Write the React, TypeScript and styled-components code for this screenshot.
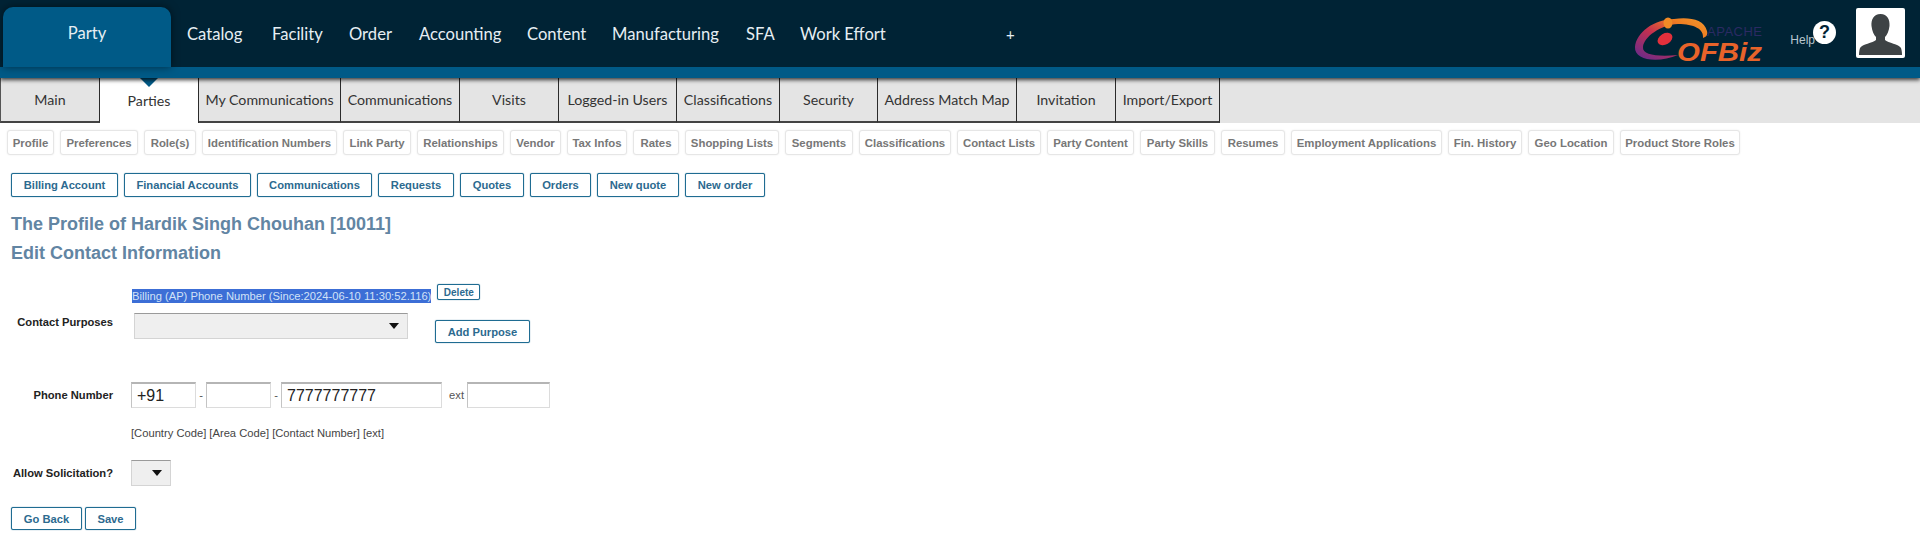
import React from 'react';
import styled, { createGlobalStyle } from 'styled-components';

const GlobalStyle = createGlobalStyle`
    html, body {
        margin: 0;
        padding: 0;
        background: #fff;
        font-family: "Liberation Sans", Arial, sans-serif;
    }
`;

const menuFont = `Lato, "Noto Sans", sans-serif`;

const Page = styled.div`
    width: 1920px;
    height: 543px;
    overflow: hidden;
`;

const Header = styled.header`
    position: relative;
    z-index: 2;
    display: flex;
    height: 67px;
    background: #002335;
    border-bottom: 11px solid #005a87;
    box-shadow: 0 2px 4px rgba(0, 0, 0, 0.75);
`;

const PartyTab = styled.div`
    width: 168px;
    height: 60px;
    margin: 7px 0 0 3px;
    padding-top: 16px;
    box-sizing: border-box;
    background: #005a87;
    border-radius: 10px 10px 0 0;
    box-shadow: 0 0 8px rgba(0, 0, 0, 0.5);
    color: #e6eef3;
    font: 400 16.6px ${menuFont};
    text-align: center;
`;

const MainMenu = styled.nav`
    display: flex;
    align-items: center;
    height: 67px;
    margin-left: 16px;
`;

const MenuItem = styled.a<{ $w: number }>`
    width: ${p => p.$w}px;
    color: #e6eef3;
    font: 400 16.6px ${menuFont};
    white-space: nowrap;
`;

const Plus = styled.span`
    margin-left: 118px;
    color: #e6eef3;
    font: 400 15px ${menuFont};
`;

const HeaderRight = styled.div`
    display: flex;
    align-items: flex-start;
    margin-left: auto;
`;

const Logo = styled.svg`
    width: 133px;
    height: 46px;
    margin: 17px 23px 0 0;
    overflow: visible;
`;

const HelpLabel = styled.span`
    margin-top: 33px;
    color: #b9c6cf;
    font-size: 12px;
`;

const HelpIcon = styled.div`
    width: 23px;
    height: 23px;
    margin: 21px 20px 0 -2px;
    border-radius: 50%;
    background: #fff;
    color: #002335;
    font: 700 18px/23px "Liberation Sans", sans-serif;
    text-align: center;
`;

const Avatar = styled.svg`
    width: 49px;
    height: 50px;
    margin: 8px 15px 0 0;
    background: #fff;
    border-radius: 2px;
`;

const TabBar = styled.div`
    display: flex;
    height: 45px;
    background: #e4e4e4;
`;

const Tab = styled.a<{ $w: number; $active?: boolean }>`
    position: relative;
    display: flex;
    align-items: center;
    justify-content: center;
    width: ${p => p.$w}px;
    box-sizing: border-box;
    background: ${p => (p.$active ? '#fff' : '#e4e4e4')};
    border-right: 1px solid #2b2b2b;
    border-bottom: ${p => (p.$active ? 'none' : '2px solid #444')};
    color: #333;
    font: 400 14.2px ${menuFont};
    white-space: nowrap;

    &:first-child {
        border-left: 1px solid #555;
    }

    ${p =>
        p.$active &&
        `&::before {
            content: '';
            position: absolute;
            top: 0;
            left: 50%;
            margin-left: -9px;
            border: 9px solid transparent;
            border-top-color: #005a87;
            border-bottom: none;
        }`}
`;

const PillRow = styled.div`
    display: flex;
    gap: 6px;
    margin: 7px 0 0 7px;
`;

const Pill = styled.a<{ $w: number }>`
    display: flex;
    align-items: center;
    justify-content: center;
    width: ${p => p.$w}px;
    height: 25px;
    box-sizing: border-box;
    background: #fff;
    border: 1px solid #e6e6e6;
    border-radius: 3px;
    box-shadow: 0 0 2px rgba(0, 0, 0, 0.08);
    color: #777;
    font-size: 11.4px;
    font-weight: 700;
    white-space: nowrap;
`;

const ButtonRow = styled.div`
    display: flex;
    gap: 6px;
    margin: 18px 0 0 11px;
`;

const Button = styled.a<{ $w: number; $h?: number; $small?: boolean }>`
    display: flex;
    align-items: center;
    justify-content: center;
    flex: none;
    width: ${p => p.$w}px;
    height: ${p => p.$h ?? 24}px;
    box-sizing: border-box;
    background: #fff;
    border: 1px solid #1f6c92;
    border-radius: 2px;
    box-shadow: 0 0 1px #1f6c92;
    color: #2c6a8f;
    font-size: ${p => (p.$small ? 10 : 11.2)}px;
    font-weight: 700;
    white-space: nowrap;
`;

const DeleteButton = styled(Button)`
    margin-left: 6px;
`;

const AddPurposeButton = styled(Button)`
    margin: 7px 0 0 27px;
`;

const Title = styled.h1`
    margin: 17px 0 0 11px;
    color: #6285a3;
    font-size: 18px;
    line-height: 21px;
    font-weight: 700;
`;

const SubTitle = styled.h2`
    margin: 8px 0 0 11px;
    color: #6285a3;
    font-size: 18px;
    line-height: 21px;
    font-weight: 700;
`;

const Form = styled.form`
    display: flex;
    flex-direction: column;
    margin-top: 20px;
`;

const Row = styled.div<{ $mt?: number; $top?: boolean }>`
    display: flex;
    align-items: ${p => (p.$top ? 'flex-start' : 'center')};
    margin-top: ${p => p.$mt ?? 0}px;
`;

const Label = styled.label<{ $pt?: number }>`
    flex: none;
    width: 113px;
    margin-right: 18px;
    padding-top: ${p => p.$pt ?? 0}px;
    color: #222;
    font-size: 11.2px;
    font-weight: 700;
    text-align: right;
`;

const PurposeLine = styled.div`
    display: flex;
    align-items: flex-start;
    margin-left: 132px;
`;

const Selected = styled.span`
    margin-top: 5px;
    background: #3c6ed6;
    color: #d2e2f6;
    font-size: 11.2px;
    line-height: 14px;
    white-space: nowrap;
`;

const SelectWrap = styled.div<{ $w: number; $ml?: number }>`
    position: relative;
    flex: none;
    width: ${p => p.$w}px;
    height: 26px;
    margin-left: ${p => p.$ml ?? 0}px;

    &::after {
        content: '';
        position: absolute;
        top: 10px;
        right: 9px;
        border: 5px solid transparent;
        border-top: 6px solid #111;
        border-bottom: none;
    }
`;

const Select = styled.select`
    display: block;
    width: 100%;
    height: 100%;
    box-sizing: border-box;
    appearance: none;
    background: #efefef;
    border: 1px solid #d4d4d4;
    border-top: 1px solid #9a9a9a;
    border-radius: 0;
`;

const Input = styled.input<{ $w: number }>`
    width: ${p => p.$w}px;
    height: 26px;
    box-sizing: border-box;
    padding: 0 5px;
    background: #fff;
    border: 1px solid #dcdcdc;
    border-top: 2px solid #b5b5b5;
    border-left: 1px solid #c4c4c4;
    border-radius: 0;
    color: #222;
    font: 400 16px "Liberation Sans", sans-serif;
`;

const Sep = styled.span`
    flex: none;
    width: 10px;
    color: #555;
    font-size: 11.2px;
    text-align: center;
`;

const ExtLabel = styled(Sep)`
    width: 25px;
    padding-right: 3px;
    box-sizing: border-box;
    text-align: right;
`;

const Hint = styled.div`
    margin: 19px 0 0 131px;
    color: #444;
    font-size: 11.2px;
    line-height: 13px;
`;

const FooterButtons = styled.div`
    display: flex;
    gap: 3px;
    margin: 21px 0 0 11px;
`;

const menuItems: [string, number][] = [
    ['Catalog', 85],
    ['Facility', 77],
    ['Order', 70],
    ['Accounting', 108],
    ['Content', 85],
    ['Manufacturing', 134],
    ['SFA', 54],
    ['Work Effort', 88],
];

const tabs: [string, number][] = [
    ['Main', 100],
    ['Parties', 99],
    ['My Communications', 142],
    ['Communications', 119],
    ['Visits', 99],
    ['Logged-in Users', 118],
    ['Classifications', 103],
    ['Security', 98],
    ['Address Match Map', 139],
    ['Invitation', 99],
    ['Import/Export', 104],
];

const pills: [string, number][] = [
    ['Profile', 47],
    ['Preferences', 78],
    ['Role(s)', 52],
    ['Identification Numbers', 135],
    ['Link Party', 68],
    ['Relationships', 87],
    ['Vendor', 51],
    ['Tax Infos', 60],
    ['Rates', 46],
    ['Shopping Lists', 94],
    ['Segments', 68],
    ['Classifications', 92],
    ['Contact Lists', 84],
    ['Party Content', 87],
    ['Party Skills', 75],
    ['Resumes', 64],
    ['Employment Applications', 151],
    ['Fin. History', 74],
    ['Geo Location', 86],
    ['Product Store Roles', 120],
];

const actions: [string, number][] = [
    ['Billing Account', 107],
    ['Financial Accounts', 127],
    ['Communications', 115],
    ['Requests', 76],
    ['Quotes', 64],
    ['Orders', 61],
    ['New quote', 82],
    ['New order', 80],
];

const OfbizLogo = () => (
    <Logo viewBox="0 0 133 46">
        <defs>
            <linearGradient id="swoosh" x1="0" y1="1" x2="1" y2="0">
                <stop offset="0" stopColor="#5f2a91" />
                <stop offset="0.45" stopColor="#c4304f" />
                <stop offset="0.75" stopColor="#ef7d22" />
                <stop offset="1" stopColor="#f29a2e" />
            </linearGradient>
        </defs>
        <path
            d="M44 38C25 46 0 44 1 30C2 16 20 2 40 2C55 0 70 2 73 14C74 18 72 20 69 21C70 12 60 7 44 7C26 8 10 20 9 30C8 38 24 40 44 38Z"
            fill="url(#swoosh)"
        />
        <ellipse cx="34" cy="6" rx="4.5" ry="5.5" fill="#f08a26" />
        <ellipse cx="31" cy="22" rx="8" ry="5.5" transform="rotate(-30 31 22)" fill="#e2303c" />
        <text x="73" y="19" fontFamily="Liberation Sans, sans-serif" fontSize="13" fill="#2b2a63" textLength="55">
            APACHE
        </text>
        <text
            x="43"
            y="44"
            fontFamily="Liberation Sans, sans-serif"
            fontSize="25"
            fontWeight="700"
            fontStyle="italic"
            fill="#e8632a"
            textLength="85"
            lengthAdjust="spacingAndGlyphs"
        >
            OFBiz
        </text>
    </Logo>
);

const App: React.FC = () => (
    <Page>
        <GlobalStyle />
        <Header>
            <PartyTab>Party</PartyTab>
            <MainMenu>
                {menuItems.map(([name, w]) => (
                    <MenuItem key={name} $w={w}>
                        {name}
                    </MenuItem>
                ))}
                <Plus>+</Plus>
            </MainMenu>
            <HeaderRight>
                <OfbizLogo />
                <HelpLabel>Help</HelpLabel>
                <HelpIcon>?</HelpIcon>
                <Avatar viewBox="0 0 49 50">
                    <path
                        d="M24.5 6C17.5 6 15 12 15.5 18C16 23 18 27 20 29L20 32C17 35 6 36 4 40C3 43 3 46 3 47L46 47C46 46 46 43 45 40C43 36 32 35 29 32L29 29C31 27 33 23 33.5 18C34 12 31.5 6 24.5 6Z"
                        fill="#3e4345"
                    />
                </Avatar>
            </HeaderRight>
        </Header>
        <TabBar>
            {tabs.map(([name, w]) => (
                <Tab key={name} $w={w} $active={name === 'Parties'}>
                    {name}
                </Tab>
            ))}
        </TabBar>
        <PillRow>
            {pills.map(([name, w]) => (
                <Pill key={name} $w={w}>
                    {name}
                </Pill>
            ))}
        </PillRow>
        <ButtonRow>
            {actions.map(([name, w]) => (
                <Button key={name} $w={w}>
                    {name}
                </Button>
            ))}
        </ButtonRow>
        <Title>The Profile of Hardik Singh Chouhan [10011]</Title>
        <SubTitle>Edit Contact Information</SubTitle>
        <Form>
            <PurposeLine>
                <Selected>Billing (AP) Phone Number (Since:2024-06-10 11:30:52.116)</Selected>
                <DeleteButton $w={43} $h={16} $small>
                    Delete
                </DeleteButton>
            </PurposeLine>
            <Row $mt={10} $top>
                <Label $pt={3}>Contact Purposes</Label>
                <SelectWrap $w={274} $ml={3}>
                    <Select />
                </SelectWrap>
                <AddPurposeButton $w={95} $h={23}>
                    Add Purpose
                </AddPurposeButton>
            </Row>
            <Row $mt={39}>
                <Label>Phone Number</Label>
                <Input $w={65} defaultValue="+91" />
                <Sep>-</Sep>
                <Input $w={65} />
                <Sep>-</Sep>
                <Input $w={161} defaultValue="7777777777" />
                <ExtLabel>ext</ExtLabel>
                <Input $w={83} />
            </Row>
            <Hint>[Country Code] [Area Code] [Contact Number] [ext]</Hint>
            <Row $mt={20}>
                <Label>Allow Solicitation?</Label>
                <SelectWrap $w={40}>
                    <Select />
                </SelectWrap>
            </Row>
            <FooterButtons>
                <Button $w={71} $h={23}>
                    Go Back
                </Button>
                <Button $w={51} $h={23}>
                    Save
                </Button>
            </FooterButtons>
        </Form>
    </Page>
);

export default App;
